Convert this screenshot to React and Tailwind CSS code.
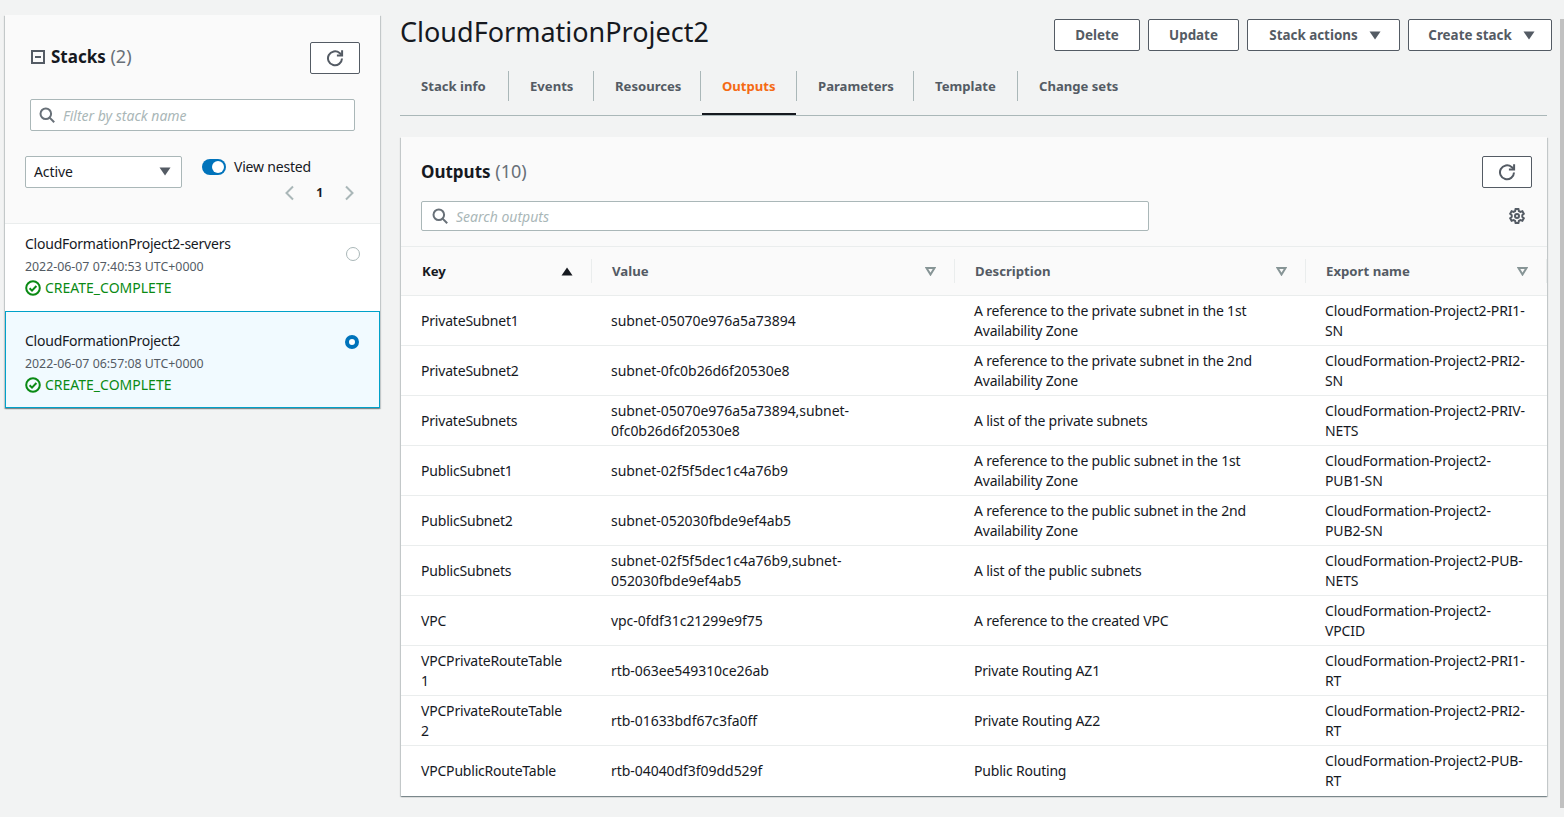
const outputs = [
  ["PrivateSubnet1", "subnet-05070e976a5a73894", "A reference to the private subnet in the 1st Availability Zone", "CloudFormation-Project2-PRI1-SN"],
  ["PrivateSubnet2", "subnet-0fc0b26d6f20530e8", "A reference to the private subnet in the 2nd Availability Zone", "CloudFormation-Project2-PRI2-SN"],
  ["PrivateSubnets", "subnet-05070e976a5a73894,subnet-0fc0b26d6f20530e8", "A list of the private subnets", "CloudFormation-Project2-PRIV-NETS"],
  ["PublicSubnet1", "subnet-02f5f5dec1c4a76b9", "A reference to the public subnet in the 1st Availability Zone", "CloudFormation-Project2-PUB1-SN"],
  ["PublicSubnet2", "subnet-052030fbde9ef4ab5", "A reference to the public subnet in the 2nd Availability Zone", "CloudFormation-Project2-PUB2-SN"],
  ["PublicSubnets", "subnet-02f5f5dec1c4a76b9,subnet-052030fbde9ef4ab5", "A list of the public subnets", "CloudFormation-Project2-PUB-NETS"],
  ["VPC", "vpc-0fdf31c21299e9f75", "A reference to the created VPC", "CloudFormation-Project2-VPCID"],
  ["VPCPrivateRouteTable1", "rtb-063ee549310ce26ab", "Private Routing AZ1", "CloudFormation-Project2-PRI1-RT"],
  ["VPCPrivateRouteTable2", "rtb-01633bdf67c3fa0ff", "Private Routing AZ2", "CloudFormation-Project2-PRI2-RT"],
  ["VPCPublicRouteTable", "rtb-04040df3f09dd529f", "Public Routing", "CloudFormation-Project2-PUB-RT"],
];

const tabs = [
  ["Stack info", "w-[108px]"],
  ["Events", "w-[84px]"],
  ["Resources", "w-[106px]"],
  ["Outputs", "w-[94px]"],
  ["Parameters", "w-[116px]"],
  ["Template", "w-[103px]"],
  ["Change sets", "w-[120px]"],
];

function RefreshIcon() {
  return (
    <svg width="18" height="18" viewBox="0 0 18 18" fill="none" stroke="#545b64" strokeWidth="2">
      <path d="M16 9.5a7 7 0 1 1-2.4-5.5l2 1.8" />
      <path d="M16.1 1.2v5.2h-5.2" />
    </svg>
  );
}

function SearchIcon() {
  return (
    <svg width="16" height="16" viewBox="0 0 16 16" fill="none" stroke="#687078" strokeWidth="2">
      <circle cx="6.8" cy="6.8" r="5.3" />
      <path d="M10.6 10.6l4.6 4.6" />
    </svg>
  );
}

function Caret({ className }) {
  return (
    <svg width="12" height="9" viewBox="0 0 12 9" className={className} fill="#545b64">
      <path d="M0.5 0.5h11L6 8.5z" />
    </svg>
  );
}

function FilterCaret() {
  return (
    <svg width="11" height="9" viewBox="0 0 11 9" fill="none" stroke="#879596" strokeWidth="2">
      <path d="M1.5 1h8L5.5 7.5z" />
    </svg>
  );
}

function CheckCircle() {
  return (
    <svg width="16" height="16" viewBox="0 0 16 16" fill="none" stroke="#0a8a14" strokeWidth="2">
      <circle cx="8" cy="8" r="6.8" />
      <path d="M4.6 8.2l2.4 2.4 4.4-4.6" />
    </svg>
  );
}

function StackItem({ name, time, selected }) {
  return (
    <div
      className={
        selected
          ? "flex h-[97px] justify-between border border-[#00a1c9] bg-[#f1faff] pl-[19px] pr-[20px] pt-[19px]"
          : "flex h-[87px] justify-between bg-white pl-[20px] pr-[20px] pt-[10px]"
      }
    >
      <div>
        <div className="text-[14px] leading-[20px] tracking-[-0.23px] text-[#16191f]">{name}</div>
        <div className="mt-[3px] text-[12.35px] leading-[20px] text-[#545b64]">{time}</div>
        <div className="flex items-center gap-[4px] text-[14px] leading-[22px] text-[#0a8a14]">
          <CheckCircle />
          CREATE_COMPLETE
        </div>
      </div>
      {selected ? (
        <div className="mt-[4px] h-[14px] w-[14px] rounded-full border-[4px] border-[#0073bb] bg-white" />
      ) : (
        <div className="mt-[13px] h-[14px] w-[14px] rounded-full border border-[#aab7b8] bg-white" />
      )}
    </div>
  );
}

function Sidebar() {
  return (
    <aside className="ml-[5px] mt-[15px] h-[393px] w-[375px] shrink-0 bg-[#fafafa] shadow-[0_1px_1px_0_rgba(0,28,36,0.3),1px_1px_1px_0_rgba(0,28,36,0.15),-1px_1px_1px_0_rgba(0,28,36,0.15)]">
      <div className="h-[209px] border-b border-[#eaeded]">
        <div className="flex items-start justify-between pl-[26px] pr-[20px] pt-[27px]">
          <div className="flex items-center gap-[6px] pt-[2px]">
            <div className="flex h-[14px] w-[14px] items-center justify-center border-2 border-[#545b64]">
              <div className="h-[2px] w-[6px] bg-[#545b64]" />
            </div>
            <div className="text-[18px] leading-[24px] text-[#16191f]">
              <span className="text-[17px] font-bold">Stacks</span> <span className="text-[#687078]">(2)</span>
            </div>
          </div>
          <button className="flex h-[32px] w-[50px] items-center justify-center rounded-[2px] border border-[#545b64] bg-white">
            <RefreshIcon />
          </button>
        </div>
        <div className="ml-[25px] mr-[25px] mt-[25px] flex h-[32px] items-center gap-[8px] rounded-[2px] border border-[#aab7b8] bg-white pl-[8px]">
          <SearchIcon />
          <span className="text-[14px] italic text-[#aab7b8]">Filter by stack name</span>
        </div>
        <div className="mt-[25px] flex pl-[20px]">
          <div className="flex h-[32px] w-[157px] items-center justify-between rounded-[2px] border border-[#aab7b8] bg-white pb-[1px] pl-[8px] pr-[10px] text-[14px] tracking-[-0.1px] text-[#16191f]">
            Active
            <Caret />
          </div>
          <div className="ml-[20px] w-[153px]">
            <div className="flex items-center gap-[8px]">
              <div className="flex h-[16px] w-[24px] items-center justify-end rounded-full bg-[#0073bb] pr-[2px]">
                <div className="h-[12px] w-[12px] rounded-full bg-white" />
              </div>
              <span className="text-[14px] leading-[22px] tracking-[-0.2px] text-[#16191f]">View nested</span>
            </div>
            <div className="mt-[6px] flex items-center justify-end gap-[21px]">
              <svg width="11" height="16" viewBox="0 0 11 16" fill="none" stroke="#aab7b8" strokeWidth="2"><path d="M9 1.5L2.5 8 9 14.5" /></svg>
              <span className="text-[12px] font-bold text-[#16191f]">1</span>
              <svg width="11" height="16" viewBox="0 0 11 16" fill="none" stroke="#aab7b8" strokeWidth="2"><path d="M2 1.5L8.5 8 2 14.5" /></svg>
            </div>
          </div>
        </div>
      </div>
      <StackItem name="CloudFormationProject2-servers" time="2022-06-07 07:40:53 UTC+0000" />
      <StackItem name="CloudFormationProject2" time="2022-06-07 06:57:08 UTC+0000" selected />
    </aside>
  );
}

function ActionButton({ children, width, caret }) {
  return (
    <button
      className={
        caret
          ? `flex h-[32px] items-center justify-center gap-[11px] rounded-[2px] border border-[#545b64] bg-white pl-[3px] text-[13.4px] font-bold text-[#545b64] ${width}`
          : `flex h-[32px] items-center justify-center rounded-[2px] border border-[#545b64] bg-white text-[13.4px] font-bold text-[#545b64] ${width}`
      }
    >
      {children}
      {caret ? <Caret /> : null}
    </button>
  );
}

function Tabs() {
  return (
    <div className="mt-[20px] flex h-[45px] w-[1147px] border-b border-[#aab7b8]">
      {tabs.map(([tab, width], i) => (
        <div key={tab} className="flex h-[44px] items-start">
          {i > 0 ? <div className="h-[30px] w-px shrink-0 bg-[#aab7b8]" /> : null}
          <div
            className={
              tab === "Outputs"
                ? `ml-[1px] h-[44px] border-b-[2px] border-[#16191f] pl-[20px] pt-[4px] text-[13.1px] font-bold leading-[22px] text-[#f56a14] ${width}`
                : `h-[44px] pl-[21px] pt-[4px] text-[13.1px] font-bold leading-[22px] text-[#545b64] ${width}`
            }
          >
            {tab}
          </div>
        </div>
      ))}
    </div>
  );
}

function HeaderCell({ label, sorted }) {
  return (
    <div className="flex h-[48px] items-center">
      <div className="flex h-[24px] w-full items-center justify-between border-r border-[#eaeded] pl-[20px] pr-[18px]">
        <span className={sorted ? "pt-[2px] text-[13.2px] font-bold text-[#16191f]" : "pt-[2px] text-[13.2px] font-bold text-[#545b64]"}>{label}</span>
        {sorted ? <Caret className="rotate-180 [&>path]:fill-[#16191f]" /> : <FilterCaret />}
      </div>
    </div>
  );
}

function OutputsTable() {
  return (
    <div>
      <div className="grid grid-cols-[190px_363px_351px_241px] border-b border-[#eaeded] pl-[1px]">
        <HeaderCell label="Key" sorted />
        <HeaderCell label="Value" />
        <HeaderCell label="Description" />
        <HeaderCell label="Export name" />
      </div>
      {outputs.map((row, i) => (
        <div
          key={row[0]}
          className={
            i === outputs.length - 1
              ? "grid h-[50px] grid-cols-[190px_363px_351px_242px] items-center bg-white text-[14px] leading-[20px] text-[#16191f]"
              : "grid h-[50px] grid-cols-[190px_363px_351px_242px] items-center border-b border-[#eaeded] bg-white text-[14px] leading-[20px] text-[#16191f]"
          }
        >
          <div className="break-all pl-[20px] pr-[25px] tracking-[-0.2px]">{row[0]}</div>
          <div className="pl-[20px] pr-[100px] tracking-[-0.05px]">{row[1]}</div>
          <div className="pl-[20px] pr-[40px] tracking-[-0.2px]">{row[2]}</div>
          <div className="pl-[20px] pr-[20px] tracking-[-0.14px]">{row[3]}</div>
        </div>
      ))}
    </div>
  );
}

export default function App() {
  return (
    <div className="relative flex h-[817px] overflow-hidden bg-[#f2f3f3] font-['Noto_Sans',sans-serif]">
      <Sidebar />
      <main className="ml-[20px] w-[1148px] shrink-0">
        <div className="flex items-start justify-between pt-[19px]">
          <h1 className="text-[27px] leading-[26px] text-[#16191f]">CloudFormationProject2</h1>
          <div className="-mr-[4px] flex gap-[8px]">
            <ActionButton width="w-[86px]">Delete</ActionButton>
            <ActionButton width="w-[91px]">Update</ActionButton>
            <ActionButton width="w-[153px]" caret>Stack actions</ActionButton>
            <ActionButton width="w-[144px]" caret>Create stack</ActionButton>
          </div>
        </div>
        <Tabs />
        <section className="ml-[1px] mt-[21px] w-[1146px] bg-[#fafafa] shadow-[0_1px_1px_0_rgba(0,28,36,0.3),1px_1px_1px_0_rgba(0,28,36,0.15),-1px_1px_1px_0_rgba(0,28,36,0.15)]">
          <div className="h-[110px] border-b border-[#eaeded] pl-[20px] pr-[15px] pt-[19px]">
            <div className="flex items-start justify-between">
              <div className="pt-[3px] text-[18px] leading-[24px] text-[#16191f]">
                <span className="text-[17px] font-bold">Outputs</span> <span className="text-[#687078]">(10)</span>
              </div>
              <button className="flex h-[32px] w-[50px] items-center justify-center rounded-[2px] border border-[#545b64] bg-white">
                <RefreshIcon />
              </button>
            </div>
            <div className="mt-[13px] flex items-center justify-between pr-[6px]">
              <div className="flex h-[30px] w-[728px] items-center gap-[8px] rounded-[2px] border border-[#aab7b8] bg-white pl-[10px]">
                <SearchIcon />
                <span className="text-[14px] italic text-[#aab7b8]">Search outputs</span>
              </div>
              <svg width="18" height="18" viewBox="0 0 18 18" fill="none" stroke="#545b64" strokeWidth="2">
                <path d="M7.6 2h2.8l.5 2 1.5.9 2-.6 1.4 2.4-1.5 1.4v1.8l1.5 1.4-1.4 2.4-2-.6-1.5.9-.5 2H7.6l-.5-2-1.5-.9-2 .6-1.4-2.4 1.5-1.4V8.1L2.2 6.7l1.4-2.4 2 .6 1.5-.9z" />
                <circle cx="9" cy="9" r="2" />
              </svg>
            </div>
          </div>
          <OutputsTable />
        </section>
      </main>
      <div className="absolute right-0 top-[19px] h-[789px] w-[4px] bg-[#c1c1c1]" />
    </div>
  );
}
